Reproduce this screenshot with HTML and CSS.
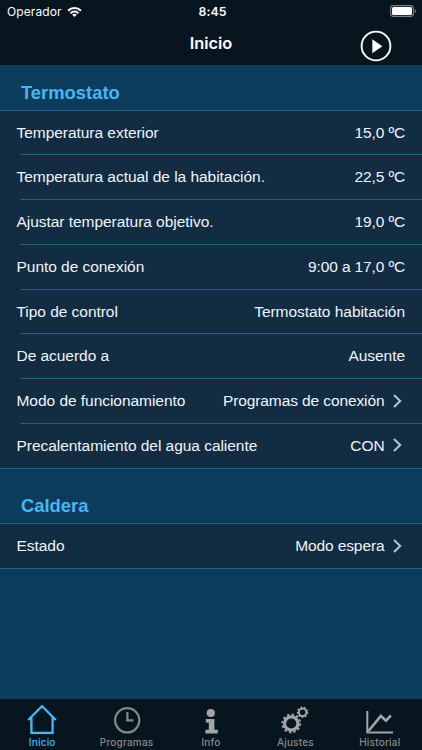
FILE: index.html
```html
<!DOCTYPE html>
<html lang="es">
<head>
<meta charset="utf-8">
<title>Inicio</title>
<link rel="stylesheet" href="styles.css">
</head>
<body>
<div class="app">
  <header class="top">
    <div class="status">
      <div class="carrier"><span>Operador</span>
        <svg class="wifi" viewBox="0 0 15 11" width="15" height="11"><path d="M0.3 3.9a10.2 10.2 0 0 1 14.4 0L13.2 5.4a8 8 0 0 0-11.4 0ZM2.8 6.4a6.7 6.7 0 0 1 9.4 0L10.7 7.9a4.5 4.5 0 0 0-6.4 0ZM5.2 8.8a3.3 3.3 0 0 1 4.6 0L7.5 11Z" fill="#fff"/></svg>
      </div>
      <div class="clock">8:45</div>
      <svg class="battery" viewBox="0 0 27 12" width="27" height="12"><rect x=".6" y=".6" width="22.8" height="10.8" rx="2.8" fill="none" stroke="#788087" stroke-width="1.1"/><rect x="2" y="2" width="20" height="8" rx="1.5" fill="#fff"/><path d="M24.7 4v4q1.4-.6 1.4-2t-1.4-2Z" fill="#788087"/></svg>
    </div>
    <div class="nav">
      <h1>Inicio</h1>
      <svg class="play" viewBox="0 0 32 32" width="32" height="32"><circle cx="16" cy="16" r="14.4" fill="none" stroke="#fff" stroke-width="1.9"/><path d="M12.3 9.2v14L22.4 16.2Z" fill="#fff"/></svg>
    </div>
  </header>
  <main>
    <h2 class="section first"><span>Termostato</span></h2>
    <ul class="list">
      <li><span>Temperatura exterior</span><span class="num">15,0 ºC</span></li>
      <li><span>Temperatura actual de la habitación.</span><span class="num">22,5 ºC</span></li>
      <li><span>Ajustar temperatura objetivo.</span><span class="num">19,0 ºC</span></li>
      <li><span>Punto de conexión</span><span class="num">9:00 a 17,0 ºC</span></li>
      <li><span>Tipo de control</span><span>Termostato habitación</span></li>
      <li><span>De acuerdo a</span><span>Ausente</span></li>
      <li><span>Modo de funcionamiento</span><span class="link">Programas de conexión<svg viewBox="0 0 9 14" width="9" height="14"><path d="M1 1l6.2 6L1 13"/></svg></span></li>
      <li><span>Precalentamiento del agua caliente</span><span class="link">CON<svg viewBox="0 0 9 14" width="9" height="14"><path d="M1 1l6.2 6L1 13"/></svg></span></li>
    </ul>
    <h2 class="section"><span>Caldera</span></h2>
    <ul class="list">
      <li><span>Estado</span><span class="link">Modo espera<svg viewBox="0 0 9 14" width="9" height="14"><path d="M1 1l6.2 6L1 13"/></svg></span></li>
    </ul>
  </main>
  <nav class="tabs">
    <a class="active"><svg viewBox="0 0 32 32" width="32" height="32"><path d="M2.2 17 16 3.2 29.8 17M5.4 14.5V29.8H26.6V14.5" fill="none" stroke="currentColor" stroke-width="2.3"/></svg><span>Inicio</span></a>
    <a><svg viewBox="0 0 32 32" width="32" height="32"><circle cx="16.2" cy="17.3" r="12.1" fill="none" stroke="currentColor" stroke-width="2.2"/><path d="M16.4 9v8.4h6" fill="none" stroke="currentColor" stroke-width="2.2"/></svg><span>Programas</span></a>
    <a class="light"><svg viewBox="0 0 32 32" width="32" height="32"><circle cx="15.8" cy="10" r="4.1" fill="currentColor"/><path d="M10.8 16h8.6v10.8h3.4V30.4H10.4v-3.6h3.4v-7.2h-3Z" fill="currentColor"/></svg><span>Info</span></a>
    <a class="light"><svg viewBox="0 0 32 32" width="32" height="32" fill="none" stroke="currentColor"><circle cx="12.3" cy="20.5" r="6.7" stroke-width="3.2"/><circle cx="12.3" cy="20.5" r="8.9" stroke-width="2" stroke-dasharray="2.33 2.33"/><circle cx="23.6" cy="9.3" r="3.8" stroke-width="2"/><circle cx="23.6" cy="9.3" r="5" stroke-width="1.5" stroke-dasharray="1.745 1.745"/></svg><span>Ajustes</span></a>
    <a class="light"><svg viewBox="0 0 32 32" width="32" height="32" fill="none" stroke="currentColor" stroke-width="2"><path d="M3.3 8v21.5h25.7"/><path d="M4.5 28 16.9 13l5 4.7 5-5.2" stroke-width="2.6"/></svg><span>Historial</span></a>
  </nav>
</div>
</body>
</html>
```
FILE: styles.css
```css
* { box-sizing: border-box; }
body { margin: 0; background: #0c3c5c; font-family: "Liberation Sans", Arial, sans-serif; color: #f0f5f9; }
h1, h2, ul { margin: 0; padding: 0; }
.app { width: 422px; height: 750px; display: flex; flex-direction: column; overflow: hidden; }
.top { height: 65px; background: #07151f; font-family: Inter, sans-serif; color: #fff; }
.status { height: 22px; display: grid; grid-template-columns: 1fr auto 1fr; align-items: center; padding: 0 5px 0 7px; }
.carrier { display: flex; align-items: center; gap: 6px; font-size: 12px; letter-spacing: .1px; }
.carrier .wifi { margin-left: -1px; }
.clock { font-size: 12.3px; font-weight: 600; letter-spacing: .1px; margin-left: 1px; }
.battery { justify-self: end; }
.nav { height: 43px; display: grid; grid-template-columns: 1fr auto 1fr; align-items: center; }
.nav h1 { grid-column: 2; font-size: 16.4px; font-weight: 600; line-height: 43px; }
.play { justify-self: end; margin: 5px 30px 0 0; }
main { flex: 1; }
.section { height: 55px; display: flex; align-items: flex-end; padding: 0 21px 7px; font-size: 18.4px; line-height: 20px; color: #43b8f5; border-bottom: 1px solid #235f88; }
.section.first { height: 46px; }
.list { list-style: none; background: #122c42; border-bottom: 1px solid #235f88; }
.list li { height: 44.75px; display: flex; justify-content: space-between; align-items: center; padding: 1px 17px 0 16.5px; font-size: 15.5px; letter-spacing: -.04px; background: linear-gradient(#235f88, #235f88) 21px 0 / 100% 1px no-repeat; }
.list li:first-child { height: 43.4px; background: none; }
.list li:only-child { height: 44.4px; }
.num { letter-spacing: -.13px; }
.link { display: flex; align-items: center; gap: 8.5px; margin-right: 3px; letter-spacing: -.1px; }
.link svg { fill: none; stroke: #b9c4cd; stroke-width: 2; margin-top: -1px; }
.tabs { height: 51px; background: #07151f; display: grid; grid-template-columns: repeat(5, 1fr); color: #85898c; font: 500 10px/12px Inter, sans-serif; letter-spacing: .2px; }
.tabs a { display: flex; flex-direction: column; align-items: center; padding-top: 4px; gap: 1px; }
.tabs svg { flex: none; }
.tabs .active { color: #43b8f5; }
.tabs .light svg { color: #a3a6a8; }
```
